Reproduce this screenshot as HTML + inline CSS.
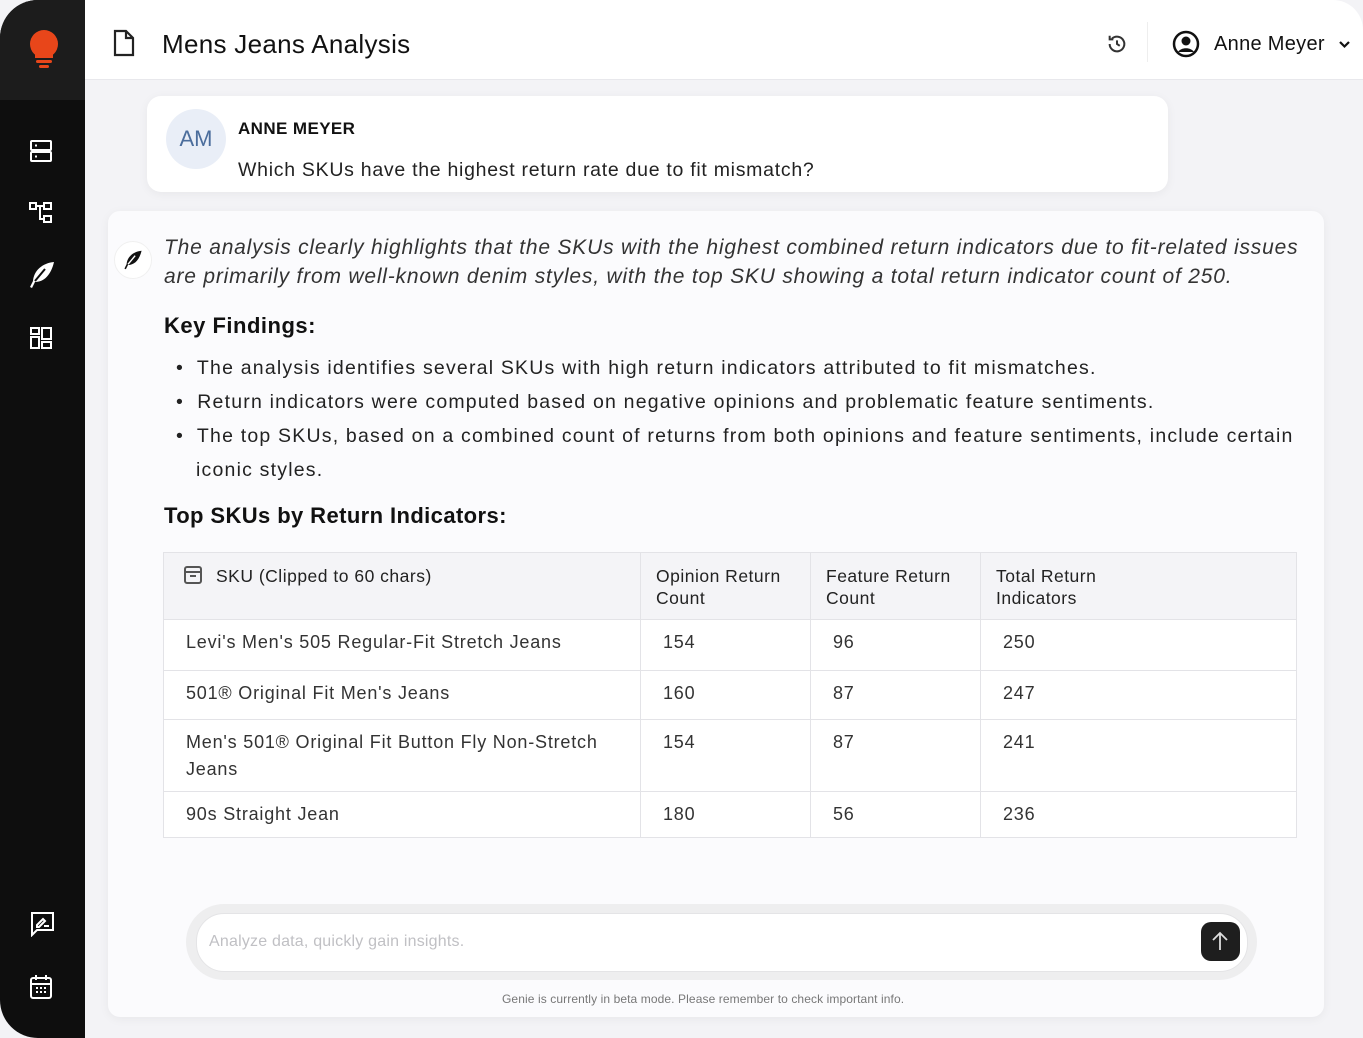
<!DOCTYPE html>
<html><head><meta charset="utf-8"><style>
*{box-sizing:border-box;margin:0;padding:0}
body{width:1363px;height:1038px;overflow:hidden;background:#f3f3f6;font-family:"Liberation Sans",sans-serif;color:#1a1a1a;position:relative}
.side{position:absolute;left:0;top:0;width:85px;height:1038px;background:#0e0e0e;border-radius:38px 0 0 38px;overflow:hidden}
.side .top{height:100px;background:#1c1c1c}
.ic{position:absolute;left:29px}
.hdr{position:absolute;left:85px;top:0;width:1278px;height:80px;background:#fff;border-bottom:1px solid #e8e8ec;border-top-right-radius:30px}
.t{position:absolute;white-space:nowrap}
.card{position:absolute;background:#fff;border-radius:14px;box-shadow:0 2px 10px rgba(0,0,0,.05)}
table{position:absolute;left:163px;top:552px;width:1134px;border-collapse:collapse;font-size:18px;color:#333;background:#fff;border:1px solid #e0e0e4;letter-spacing:0.8px}
td,th{border:1px solid #e3e3e7;vertical-align:top;text-align:left;font-weight:normal}
th{background:#f4f4f7;height:67px;padding:12px 14px 0 15px;font-size:17.5px;color:#222;line-height:22px;letter-spacing:0.5px}
td{padding:9px 20px 0 22px;line-height:27px}
</style></head><body>
<div class="side"><div class="top"></div>
<svg class="ic" style="left:27px;top:29px" width="34" height="42" viewBox="0 0 34 42"><circle cx="17" cy="15" r="14" fill="#e8461a"/><rect x="8" y="24" width="18" height="5" fill="#e8461a"/><rect x="9" y="31" width="16" height="3" rx="1.5" fill="#e8461a"/><rect x="12" y="36" width="10" height="3" rx="1.5" fill="#e8461a"/></svg>
<svg class="ic" style="top:139px" width="24" height="24" viewBox="0 0 24 24" fill="none" stroke="#fff" stroke-width="2"><rect x="2" y="2" width="20" height="9" rx="1"/><rect x="2" y="13" width="20" height="9" rx="1"/><path d="M6 6.5h2M6 17.5h2"/></svg>
<svg class="ic" style="top:201px" width="24" height="24" viewBox="0 0 24 24" fill="none" stroke="#fff" stroke-width="2"><rect x="1" y="2" width="6" height="6"/><rect x="15" y="2" width="7" height="6"/><rect x="15" y="15" width="7" height="6"/><path d="M7 5h8M11 5v13h4"/></svg>
<svg class="ic" style="top:261px" width="26" height="28" viewBox="0 0 26 28"><path d="M25 1C14 2 5 9 4 20L1 26l2 1 3-6c9 0 16-7 19-20z" fill="#fff"/><path d="M6 20l10-12" stroke="#0e0e0e" stroke-width="2"/></svg>
<svg class="ic" style="top:326px" width="24" height="24" viewBox="0 0 24 24" fill="none" stroke="#fff" stroke-width="2"><rect x="2" y="2" width="8" height="6"/><rect x="2" y="11" width="8" height="11"/><rect x="13" y="2" width="9" height="11"/><rect x="13" y="16" width="9" height="6"/></svg>
<svg class="ic" style="top:911px" width="26" height="26" viewBox="0 0 26 26" fill="none" stroke="#fff" stroke-width="2"><path d="M2 2h22v17H8l-5 5V2z"/><path d="M8 14l6-6 2 2-6 6H8zM15 15h5"/></svg>
<svg class="ic" style="top:974px" width="24" height="26" viewBox="0 0 24 26" fill="none" stroke="#fff" stroke-width="2"><rect x="2" y="4" width="20" height="20" rx="2"/><path d="M2 10h20M7 1v5M17 1v5"/><path d="M7 14h2M11 14h2M15 14h2M7 18h2M11 18h2M15 18h2" stroke-width="2"/></svg>
</div>
<div class="hdr">
<svg style="position:absolute;left:28px;top:29px" width="22" height="28" viewBox="0 0 22 28" fill="none" stroke="#222" stroke-width="2.2"><path d="M2 2h11l7 7v17H2z M13 2v7h7"/></svg>
<div class="t" style="left:77px;top:29px;font-size:26px;color:#111;letter-spacing:0.3px">Mens Jeans Analysis</div>
<svg style="position:absolute;left:1021px;top:33px" width="22" height="22" viewBox="0 0 24 24" fill="none" stroke="#333" stroke-width="2.2"><path d="M4 12a8 8 0 1 0 2.5-5.8M4 3v4h4"/><path d="M12 8v4l3 2"/></svg>
<div style="position:absolute;left:1062px;top:22px;width:1px;height:40px;background:#eee"></div>
<svg style="position:absolute;left:1087px;top:30px" width="28" height="28" viewBox="0 0 28 28"><circle cx="14" cy="14" r="12" fill="none" stroke="#111" stroke-width="2.5"/><circle cx="14" cy="11" r="4.5" fill="#111"/><path d="M6 22c3-5 13-5 16 0" fill="#111"/></svg>
<div class="t" style="left:1129px;top:33px;font-size:20px;color:#111;letter-spacing:0.3px">Anne Meyer</div>
<svg style="position:absolute;left:1253px;top:40px" width="13" height="9" viewBox="0 0 13 9" fill="none" stroke="#111" stroke-width="2.2"><path d="M2 2l4.5 4.5L11 2"/></svg>
</div>
<div class="card" style="left:147px;top:96px;width:1021px;height:96px">
<div style="position:absolute;left:19px;top:13px;width:60px;height:60px;border-radius:50%;background:#e9eef7;color:#4b6d9c;font-size:22px;text-align:center;line-height:60px">AM</div>
<div class="t" style="left:91px;top:23px;font-size:17px;font-weight:bold;color:#111;letter-spacing:0.4px">ANNE MEYER</div>
<div class="t" style="left:91px;top:63px;font-size:19.5px;color:#222;letter-spacing:0.72px">Which SKUs have the highest return rate due to fit mismatch?</div>
</div>
<div class="card" style="left:108px;top:211px;width:1216px;height:806px;background:#fbfbfd;border-radius:12px">
<div style="position:absolute;left:6px;top:30px;width:38px;height:38px;border-radius:50%;background:#fff;border:1px solid #f0f0f0"></div>
<svg style="position:absolute;left:15px;top:39px" width="20" height="20" viewBox="0 0 26 28"><path d="M25 1C14 2 5 9 4 20L1 26l2 1 3-6c9 0 16-7 19-20z" fill="#111"/><path d="M6 20l10-12" stroke="#fff" stroke-width="2"/></svg>
<div class="t" style="left:56px;top:22px;font-size:21px;font-style:italic;color:#333;line-height:29px;white-space:normal;width:1150px;letter-spacing:0.8px">The analysis clearly highlights that the SKUs with the highest combined return indicators due to fit-related issues are primarily from well-known denim styles, with the top SKU showing a total return indicator count of 250.</div>
<div class="t" style="left:56px;top:102px;font-size:22px;font-weight:bold;color:#111;letter-spacing:0.5px">Key Findings:</div>
<div style="position:absolute;left:68px;top:140px;width:1130px;font-size:19.5px;color:#222;line-height:34px;letter-spacing:1.2px">
<div>•&nbsp; The analysis identifies several SKUs with high return indicators attributed to fit mismatches.</div>
<div>•&nbsp; Return indicators were computed based on negative opinions and problematic feature sentiments.</div>
<div style="padding-left:20px;text-indent:-20px">•&nbsp; The top SKUs, based on a combined count of returns from both opinions and feature sentiments, include certain iconic styles.</div>
</div>
<div class="t" style="left:56px;top:292px;font-size:22px;font-weight:bold;color:#111;letter-spacing:0.4px">Top SKUs by Return Indicators:</div>
</div>
<table>
<tr><th style="width:477px;padding-left:20px"><svg style="vertical-align:-2px;margin-right:14px" width="18" height="18" viewBox="0 0 18 18" fill="none" stroke="#555" stroke-width="2"><rect x="1" y="1" width="16" height="16" rx="2"/><path d="M1 6h16M6 10h6"/></svg>SKU (Clipped to 60 chars)</th><th style="width:170px">Opinion Return<br>Count</th><th style="width:170px">Feature Return<br>Count</th><th>Total Return<br>Indicators</th></tr>
<tr style="height:51px"><td>Levi's Men's 505 Regular-Fit Stretch Jeans</td><td>154</td><td>96</td><td>250</td></tr>
<tr style="height:49px"><td>501® Original Fit Men's Jeans</td><td>160</td><td>87</td><td>247</td></tr>
<tr style="height:72px"><td>Men's 501® Original Fit Button Fly Non-Stretch Jeans</td><td>154</td><td>87</td><td>241</td></tr>
<tr style="height:46px"><td>90s Straight Jean</td><td>180</td><td>56</td><td>236</td></tr>
</table>
<div style="position:absolute;left:186px;top:904px;width:1071px;height:76px;border-radius:38px;background:#eeeeef"></div>
<div style="position:absolute;left:196px;top:913px;width:1052px;height:59px;border-radius:28px;background:#fff;border:1px solid #e4e4e6"></div>
<div class="t" style="left:209px;top:933px;font-size:16px;color:#c0c0c4;letter-spacing:0.2px">Analyze data, quickly gain insights.</div>
<div style="position:absolute;left:1201px;top:922px;width:39px;height:39px;border-radius:10px;background:#1e1e1e"></div>
<svg style="position:absolute;left:1210px;top:930px" width="20" height="22" viewBox="0 0 20 22" fill="none" stroke="#ddd" stroke-width="1.8"><path d="M10 20V3M3 10l7-7 7 7"/></svg>
<div class="t" style="left:502px;top:992px;font-size:12px;color:#777;letter-spacing:0.1px">Genie is currently in beta mode. Please remember to check important info.</div>
</body></html>
